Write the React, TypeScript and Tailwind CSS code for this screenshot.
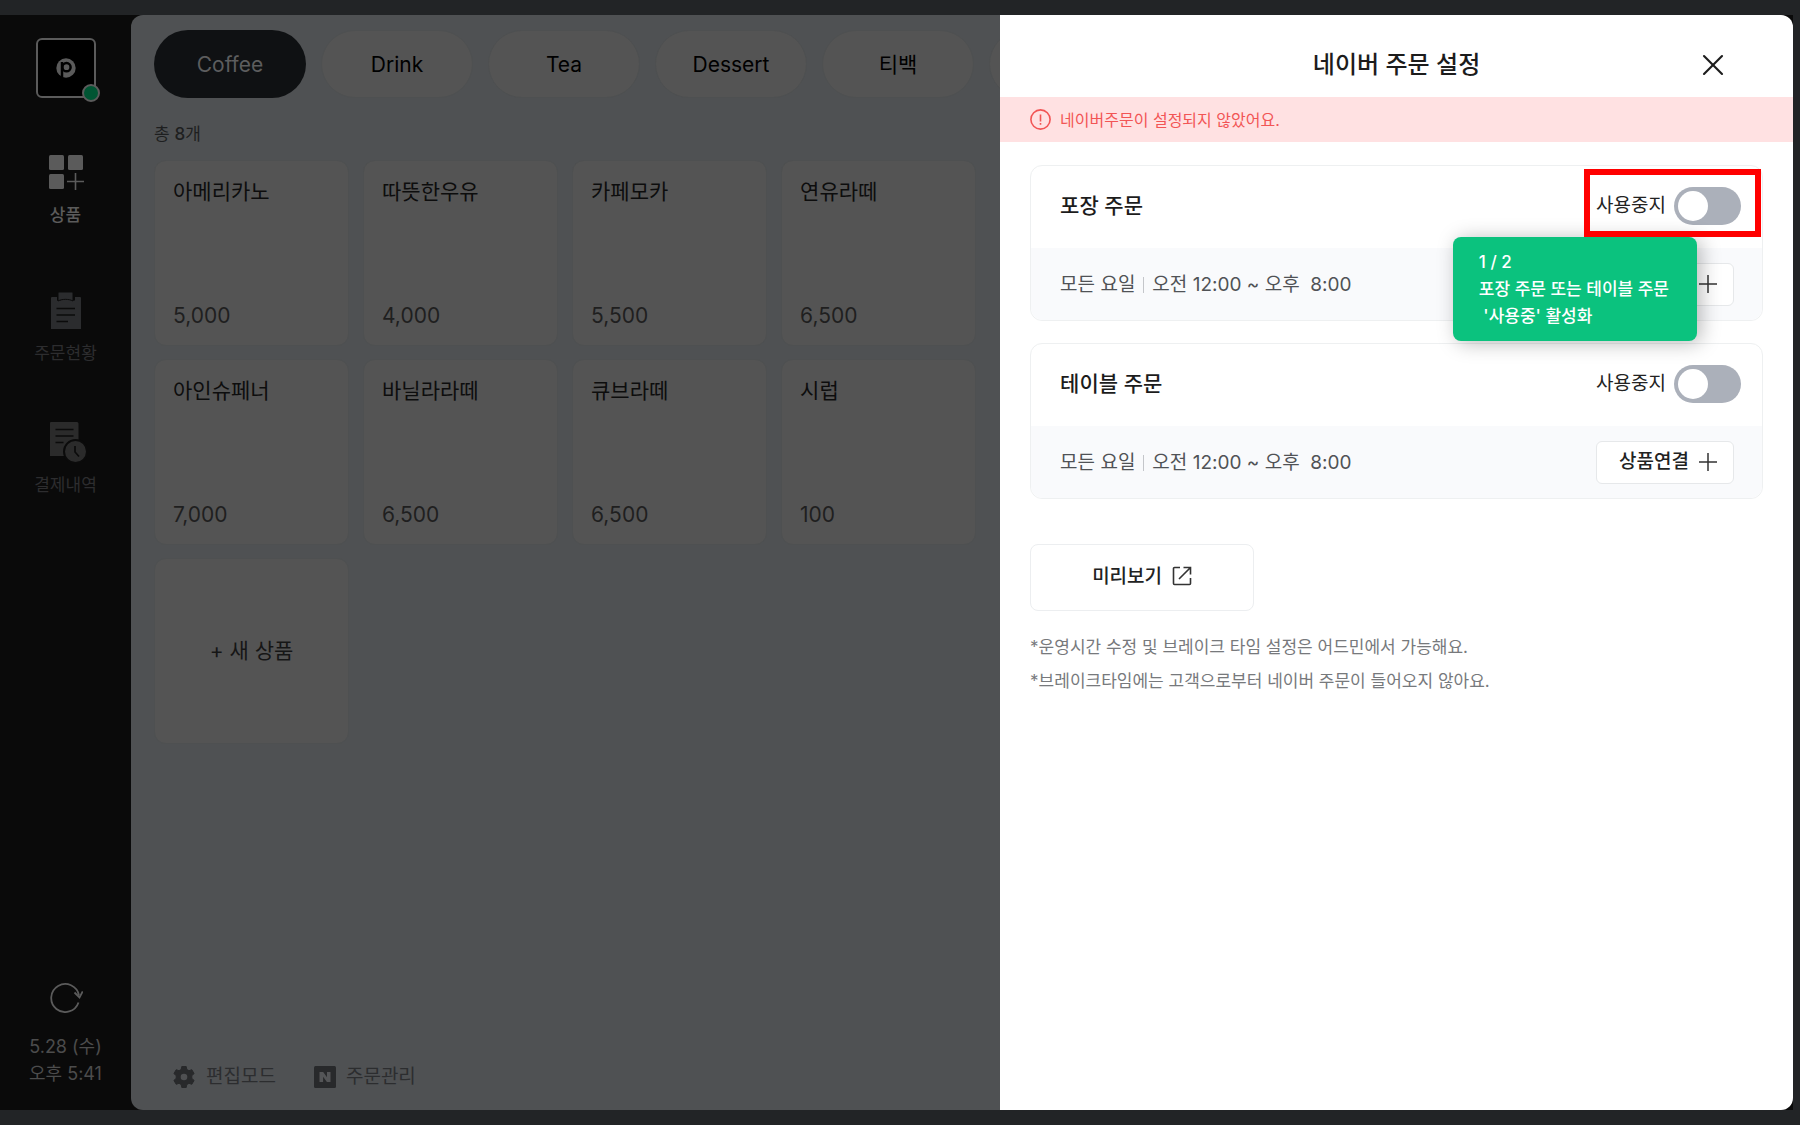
import React from "react";
import { X } from "lucide-react";

const categories = ["Coffee", "Drink", "Tea", "Dessert", "티백", ""];

const products = [
  { name: "아메리카노", price: "5,000" },
  { name: "따뜻한우유", price: "4,000" },
  { name: "카페모카", price: "5,500" },
  { name: "연유라떼", price: "6,500" },
  { name: "아인슈페너", price: "7,000" },
  { name: "바닐라라떼", price: "6,500" },
  { name: "큐브라떼", price: "6,500" },
  { name: "시럽", price: "100" },
];

function GridPlusIcon() {
  return (
    <svg width="36" height="36" viewBox="0 0 36 36" fill="#5b5b5b" aria-hidden="true">
      <rect x="1" y="1" width="15" height="15" rx="1.5" />
      <rect x="20" y="1" width="15" height="15" rx="1.5" />
      <rect x="1" y="20" width="15" height="15" rx="1.5" />
      <path d="M27.5 19v17M19 27.5h17" stroke="#5b5b5b" strokeWidth="1.6" />
    </svg>
  );
}

function ClipboardIcon() {
  return (
    <svg width="32" height="38" viewBox="0 0 32 38" aria-hidden="true">
      <path d="M2 6h5v3.5h3.2C12 7.6 20 7.6 21.800 9.500H25V6h5a1 1 0 0 1 1 1v31H1V7a1 1 0 0 1 1-1z" fill="#2b2c2e" />
      <path d="M8 2a1 1 0 0 1 1-1h13a1 1 0 0 1 1 1v8c-4-2.200-11-2.200-15 0z" fill="#2b2c2e" stroke="#0b0b0b" />
      <path d="M6.500 17.500h18.500M6.500 24h18.500M6.500 30.500h11.500" stroke="#0b0b0b" strokeWidth="1.700" />
    </svg>
  );
}

function HistoryIcon() {
  return (
    <svg width="38" height="42" viewBox="0 0 38 42" aria-hidden="true">
      <path d="M2 1h26a1.500 1.500 0 0 1 1.500 1.500V35H1V2a1 1 0 0 1 1-1z" fill="#2b2b2b" />
      <path d="M6.500 8.500h18M6.500 15h18M6.500 21.500h8" stroke="#0b0b0b" strokeWidth="1.700" />
      <circle cx="26.500" cy="30.500" r="11.500" fill="#2b2b2b" stroke="#0b0b0b" strokeWidth="2" />
      <path d="M26 25v6l4 4.500" fill="none" stroke="#0b0b0b" strokeWidth="1.700" />
    </svg>
  );
}

function RefreshIcon() {
  return (
    <svg width="36" height="32" viewBox="-2 0 36 32" fill="none" stroke="#5b5b5b" strokeWidth="1.800" aria-hidden="true">
      <path d="M29.500 21.500A14 14 0 1 1 30 14.500" />
      <path d="M25.500 11.500l5 5 3.200-6.200" />
    </svg>
  );
}

function GearIcon() {
  return (
    <svg width="24" height="24" viewBox="0 0 24 24" aria-hidden="true">
      <path
        d="M9.800 1h4.400l.6 3 2.200 1.200 2.800-1 2.300 3.900-2.300 2v2.800l2.300 2-2.300 3.900-2.800-1-2.200 1.200-.6 3H9.800l-.6-3L7 17.800l-2.800 1-2.300-3.900 2.300-2v-2.800l-2.300-2 2.300-3.900 2.800 1L9.200 4z"
        transform="translate(0 .500)"
        fill="#28292b"
        stroke="#28292b"
        strokeLinejoin="round"
      />
      <circle cx="12" cy="12" r="3.300" fill="#4f5052" />
    </svg>
  );
}

function NaverIcon() {
  return (
    <svg width="22" height="22" viewBox="0 0 22 22" aria-hidden="true">
      <rect width="22" height="22" rx="1.500" fill="#28292b" />
      <path d="M5.500 16V6h3.700l3.800 5.300V6h3.500v10h-3.600L9.100 10.700V16z" fill="#545557" />
    </svg>
  );
}

function PlusIcon() {
  return (
    <svg width="18" height="18" viewBox="0 0 18 18" stroke="#333" strokeWidth="1.500" aria-hidden="true">
      <path d="M9 0v18M0 9h18" />
    </svg>
  );
}

function ExternalIcon() {
  return (
    <svg width="20" height="20" viewBox="0 0 20 20" fill="none" stroke="#333" strokeWidth="1.600" aria-hidden="true">
      <path d="M8 1.500H2.500A1 1 0 0 0 1.500 2.500v15a1 1 0 0 0 1 1h15a1 1 0 0 0 1-1V12" />
      <path d="M11.500 1.500h7v7M18.500 1.500L7 13" />
    </svg>
  );
}

function AlertIcon() {
  return (
    <svg width="21" height="21" viewBox="0 0 21 21" fill="none" stroke="#f25555" strokeWidth="1.600" aria-hidden="true">
      <circle cx="10.500" cy="10.500" r="9.600" />
      <path d="M10.500 5.500v7M10.500 14v1.800" />
    </svg>
  );
}

function Sidebar() {
  return (
    <aside className="flex w-[131px] shrink-0 flex-col items-center bg-[#0a0a0a] pt-[23px] pb-[23px]">
      <div className="relative flex size-[60px] items-center justify-center rounded-md border-2 border-[#5b5b5b] bg-black">
        <svg width="20" height="20" viewBox="0 0 20 20" aria-label="매장 로고">
          <circle cx="10" cy="10" r="9.700" fill="#5b5b5b" />
          <circle cx="10.500" cy="9.200" r="4.100" fill="none" stroke="#000" strokeWidth="2.500" />
          <path d="M6 4v16" stroke="#000" strokeWidth="2.500" />
        </svg>
        <span className="absolute -right-[6px] -bottom-[6px] size-[18px] rounded-full border-2 border-[#5b5b5b] bg-[#005533]" />
      </div>

      <nav className="mt-[53px] flex flex-col items-center text-[17px] leading-6">
        <button className="mb-[62px] flex flex-col items-center gap-2.5 font-medium text-[#5b5b5b]">
          <span className="flex h-[42px] items-center"><GridPlusIcon /></span>
          상품
        </button>
        <button className="mb-14 flex flex-col items-center gap-2.5 text-[#2d2d2f]">
          <span className="flex h-[42px] items-center"><ClipboardIcon /></span>
          주문현황
        </button>
        <button className="flex flex-col items-center gap-2.5 text-[#2d2d2f]">
          <span className="flex h-[42px] items-center pl-1"><HistoryIcon /></span>
          결제내역
        </button>
      </nav>

      <div className="mt-auto flex flex-col items-center text-lg leading-[27px] text-[#4c4c4c]">
        <button aria-label="새로고침" className="mb-5"><RefreshIcon /></button>
        <span>5.28 (수)</span>
        <span>오후 5:41</span>
      </div>
    </aside>
  );
}

function Catalog() {
  return (
    <main className="flex min-w-0 flex-1 flex-col overflow-hidden rounded-l-xl bg-[#4f5153] pt-[15px] pb-[15px] pl-[23px]">
      <div className="flex gap-[15px]">
        {categories.map((c, i) => (
          <button
            key={i}
            className={
              i === 0
                ? "h-[68px] w-[152px] shrink-0 rounded-full bg-[#0f1113] pt-0.5 text-[21px] text-[#5c5d5e]"
                : "h-[68px] w-[152px] shrink-0 rounded-full border border-[#4e5051] bg-[#545454] pt-0.5 text-[21px] text-black"
            }
          >
            {c}
          </button>
        ))}
      </div>
      <p className="mt-6 text-[17px] leading-6 text-[#1e1f20]">
        총 <span className="font-medium">8</span>개
      </p>
      <div className="mt-3.5 mr-6 grid grid-cols-4 gap-x-3.5 gap-y-[13px]">
        {products.map((p) => (
          <button
            key={p.name}
            className="flex h-[186px] flex-col items-start justify-between rounded-xl border border-[#4e5051] bg-[#545454] px-[18px] pt-[17px] pb-[15px] text-[21px] leading-7"
          >
            <span className="text-[#0d0d0d]">{p.name}</span>
            <span className="text-[#1f1f1f]">{p.price}</span>
          </button>
        ))}
        <button className="h-[186px] rounded-xl border border-[#4e5051] bg-[#545454] text-[21px] text-[#161616]">
          + 새 상품
        </button>
      </div>
      <div className="mt-auto flex items-center gap-[38px] pl-[18px] text-[19px] leading-9 text-[#2c2d2f]">
        <button className="flex items-center gap-2.5"><GearIcon />편집모드</button>
        <button className="flex items-center gap-2.5"><NaverIcon />주문관리</button>
      </div>
    </main>
  );
}

function OrderCard({ id, title, guide }: { id: string; title: string; guide?: boolean }) {
  return (
    <section className="rounded-xl border border-[#eef0f1] bg-white">
      <div className="flex h-[82px] items-center justify-between pr-[21px] pb-0.5 pl-[29px]">
        <h2 className="text-[21px] font-medium text-[#1c1c1c]">{title}</h2>
        <div className="relative flex items-center gap-2">
          <label htmlFor={id} className="text-[19px] leading-7 text-[#222]">사용중지</label>
          <input
            id={id}
            type="checkbox"
            role="switch"
            className="h-[38px] w-[67px] appearance-none rounded-full bg-[#abb0ba] p-1 before:block before:size-[30px] before:rounded-full before:bg-white"
          />
          {guide && (
            <>
              <div className="pointer-events-none absolute -top-[18px] -right-5 -bottom-3 -left-3 z-20 border-[6px] border-[#ff0000]" />
              <div
                role="tooltip"
                className="absolute top-full right-11 z-10 mt-3 rounded-lg bg-[#0bc27e] pt-3 pr-7 pb-[11px] pl-[26px] text-[17px] leading-[27px] font-medium whitespace-pre text-white shadow-[4px_2px_20px_rgba(0,0,0,0.28)]"
              >
                <p>1 / 2</p>
                <p>포장 주문 또는 테이블 주문</p>
                <p>{" '사용중' 활성화"}</p>
              </div>
            </>
          )}
        </div>
      </div>
      <div className="flex h-[72px] items-center justify-between rounded-b-xl bg-[#f9fafc] pr-7 pl-[29px] text-[19px]">
        <p className="flex items-center pt-0.5 text-[#505256]">
          <span>모든 요일</span>
          <span className="mx-2 h-4 w-px bg-[#c4c6ca]" />
          <span className="whitespace-pre">오전 12:00 ~ 오후  8:00</span>
        </p>
        <button className="flex h-[43px] items-center gap-2.5 rounded-md border border-[#e6e8ea] bg-white pr-4 pl-[22px] font-medium text-[#222]">
          상품연결
          <PlusIcon />
        </button>
      </div>
    </section>
  );
}

function Drawer() {
  return (
    <div role="dialog" aria-label="네이버 주문 설정" className="flex w-[calc(44%+4px)] shrink-0 flex-col rounded-r-xl bg-white">
      <header className="relative flex h-[82px] items-center justify-center pt-[17px]">
        <h1 className="text-2xl font-medium text-[#1c1c1c]">네이버 주문 설정</h1>
        <button aria-label="닫기" className="absolute right-[62px]">
          <X size={36} strokeWidth={1.400} color="#1c1c1c" />
        </button>
      </header>
      <div role="alert" className="flex h-[45px] items-center gap-[9px] bg-[#ffe1e2] px-[30px] text-base text-[#f25555]">
        <AlertIcon />
        네이버주문이 설정되지 않았어요.
      </div>
      <div className="flex flex-col gap-[22px] px-[30px] pt-[23px]">
        <OrderCard id="takeout" title="포장 주문" guide />
        <OrderCard id="table" title="테이블 주문" />
      </div>
      <div className="px-[30px] pt-[45px]">
        <button className="flex h-[67px] w-56 items-center justify-center gap-2.5 rounded-lg border border-[#eceef0] bg-white text-[19px] font-medium text-[#222]">
          미리보기
          <span className="pb-1"><ExternalIcon /></span>
        </button>
        <div className="mt-[19px] text-[17px] leading-[34px] text-[#77797c]">
          <p>*운영시간 수정 및 브레이크 타임 설정은 어드민에서 가능해요.</p>
          <p>*브레이크타임에는 고객으로부터 네이버 주문이 들어오지 않아요.</p>
        </div>
      </div>
    </div>
  );
}

export default function App() {
  return (
    <div className="flex h-screen bg-[#222426] py-[15px] pr-[7px] font-['Inter','Noto_Sans_CJK_KR',sans-serif]">
      <div className="flex min-w-0 flex-1 bg-[#0a0a0a]">
        <Sidebar />
        <Catalog />
        <Drawer />
      </div>
    </div>
  );
}
